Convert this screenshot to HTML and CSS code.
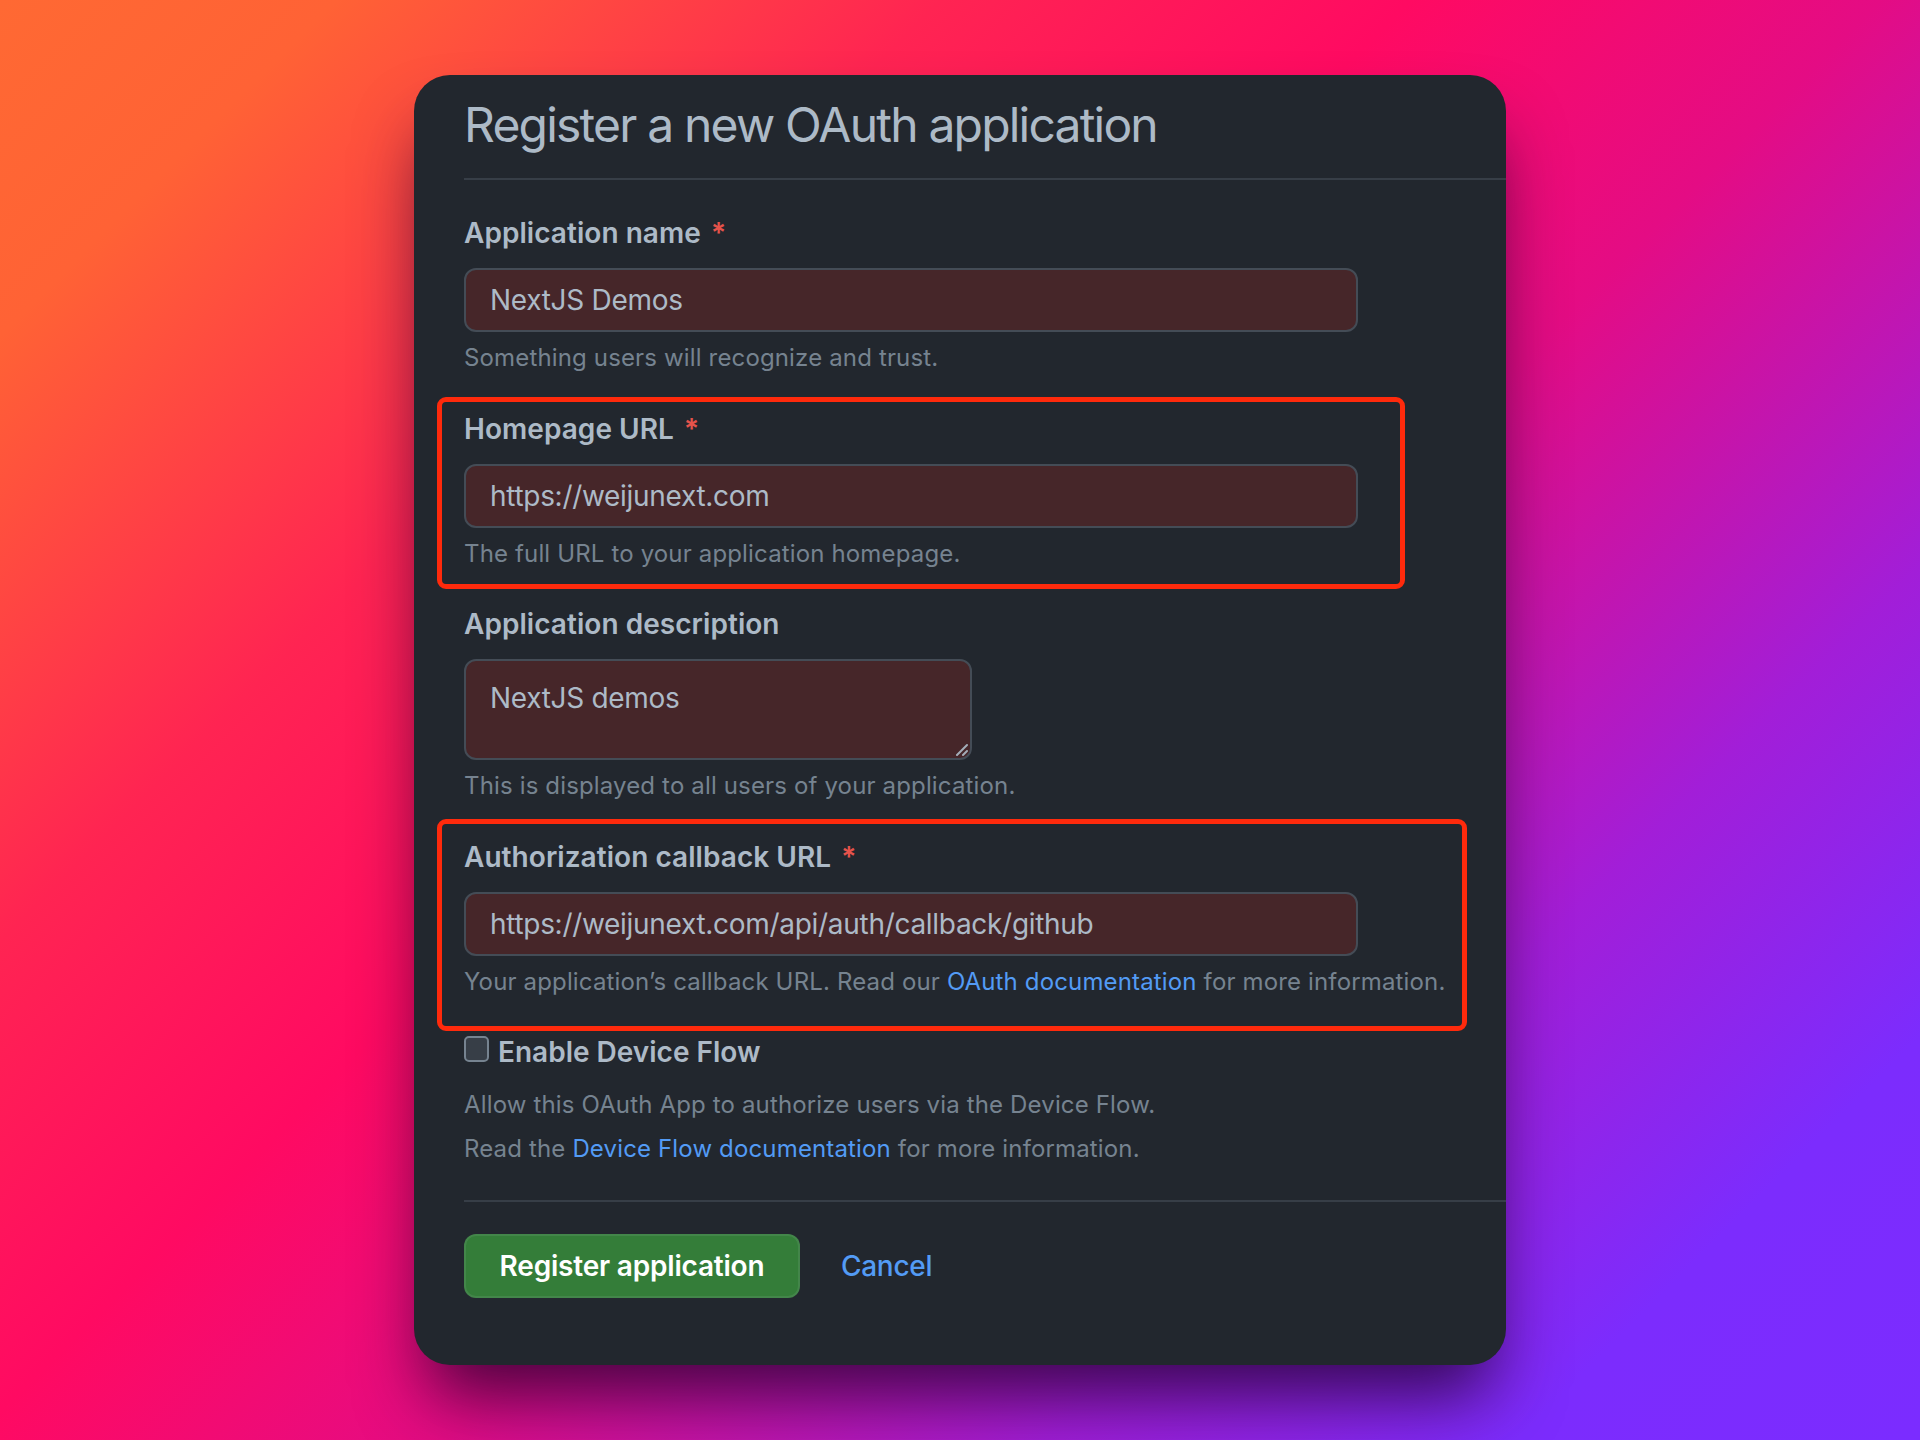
FILE: index.html
```html
<!DOCTYPE html>
<html lang="en">
<head>
<meta charset="utf-8">
<title>Register a new OAuth application</title>
<link rel="stylesheet" href="styles.css">
</head>
<body>
<main class="card">
  <header class="card-header">
    <h1 class="title">Register a new OAuth application</h1>
  </header>
  <form class="form">
    <div class="group">
      <label class="label">Application name <span class="req">*</span></label>
      <input class="field" type="text" value="NextJS Demos">
      <p class="help">Something users will recognize and trust.</p>
    </div>
    <div class="group">
      <label class="label">Homepage URL <span class="req">*</span></label>
      <input class="field" type="text" value="https://weijunext.com">
      <p class="help">The full URL to your application homepage.</p>
      <span class="mark mark-home"></span>
    </div>
    <div class="group">
      <label class="label">Application description</label>
      <div class="area-wrap">
        <textarea class="area">NextJS demos</textarea>
        <svg class="grip" width="14" height="14" viewBox="0 0 14 14"><path d="M13 3 L3 13 M13 9 L9 13" stroke="#a3adb8" stroke-width="2" stroke-linecap="round"/></svg>
      </div>
      <p class="help">This is displayed to all users of your application.</p>
    </div>
    <div class="group">
      <label class="label">Authorization callback URL <span class="req">*</span></label>
      <input class="field" type="text" value="https://weijunext.com/api/auth/callback/github">
      <p class="help">Your application’s callback URL. Read our <a class="link" href="#">OAuth documentation</a> for more information.</p>
      <span class="mark mark-callback"></span>
    </div>
    <div class="device">
      <label class="check-row"><input class="check" type="checkbox"><span class="check-label">Enable Device Flow</span></label>
      <p class="help help-first">Allow this OAuth App to authorize users via the Device Flow.</p>
      <p class="help help-second">Read the <a class="link" href="#">Device Flow documentation</a> for more information.</p>
    </div>
    <div class="actions">
      <button class="btn" type="button">Register application</button>
      <a class="cancel" href="#">Cancel</a>
    </div>
  </form>
</main>
</body>
</html>
```

FILE: styles.css
```css
* { box-sizing: border-box; }

html, body {
  margin: 0;
  padding: 0;
}

body {
  width: 1920px;
  height: 1440px;
  display: flex;
  align-items: center;
  justify-content: center;
  font-family: Inter, "Noto Sans", "Liberation Sans", sans-serif;
  background: linear-gradient(135deg, #ff6933 0%, #ff6235 10%, #ff2452 28%, #ff0a62 42%, #e40c84 56%, #a21ed8 74%, #7c2cfd 88%, #7b2cff 100%);
  overflow: hidden;
}

.card {
  width: 1092px;
  height: 1290px;
  background: #22272e;
  border-radius: 36px;
  padding-left: 50px;
  box-shadow: 0 45px 70px -15px rgba(30, 0, 45, 0.8);
}

.card-header {
  padding-top: 20px;
  padding-bottom: 23px;
  border-bottom: 2px solid #373e47;
}

.title {
  margin: 0;
  font-size: 48px;
  line-height: 60px;
  font-weight: 400;
  color: #adbac7;
  letter-spacing: -1.8px;
}

.form {
  display: flex;
  flex-direction: column;
  margin-top: 33px;
}

.group {
  position: relative;
  display: flex;
  flex-direction: column;
  align-items: flex-start;
  margin-bottom: 32.5px;
}

.label {
  display: block;
  font-size: 28px;
  line-height: 40px;
  font-weight: 600;
  color: #adbac7;
  letter-spacing: 0.05px;
}

.req {
  color: #e5534b;
  margin-left: 3px;
}

.field {
  margin-top: 15px;
  width: 894px;
  height: 64px;
  padding: 0 24px;
  background: #462629;
  border: 2px solid #444c56;
  border-radius: 12px;
  font-family: inherit;
  font-size: 28px;
  color: #adbac7;
  outline: none;
  letter-spacing: -0.3px;
}

.area-wrap {
  position: relative;
  margin-top: 15px;
  width: 508px;
  height: 101px;
}

.area {
  display: block;
  width: 100%;
  height: 100%;
  padding: 17px 24px;
  background: #462629;
  border: 2px solid #444c56;
  border-radius: 12px;
  font-family: inherit;
  font-size: 28px;
  line-height: 40px;
  color: #adbac7;
  resize: none;
  outline: none;
  letter-spacing: -0.3px;
}

.grip {
  position: absolute;
  right: 4px;
  bottom: 4px;
}

.help {
  margin: 8px 0 0;
  font-size: 24px;
  line-height: 36px;
  color: #768390;
  letter-spacing: 0.15px;
}

.link {
  color: #539bf5;
  text-decoration: none;
}

.mark {
  position: absolute;
  left: -27px;
  border: 5px solid #ff2a0c;
  border-radius: 9px;
  pointer-events: none;
}

.mark-home {
  top: -12px;
  width: 968px;
  height: 192px;
}

.mark-callback {
  top: -18px;
  width: 1030px;
  height: 212px;
}

.device {
  display: flex;
  flex-direction: column;
}

.check-row {
  display: flex;
  align-items: flex-end;
  height: 40px;
  padding-bottom: 10px;
}

.check {
  -webkit-appearance: none;
  appearance: none;
  margin: 0 9px 0 0;
  width: 25px;
  height: 26px;
  background: #373e47;
  border: 2px solid #768390;
  border-radius: 5px;
}

.check-label {
  font-size: 28px;
  line-height: 40px;
  height: 40px;
  margin-bottom: -10px;
  font-weight: 600;
  color: #adbac7;
  letter-spacing: 0;
}

.help-first {
  margin-top: 14.5px;
}

.help-second {
  margin-top: 8px;
}

.actions {
  display: flex;
  align-items: center;
  margin-top: 33.7px;
  padding-top: 32px;
  border-top: 2px solid #373e47;
}

.btn {
  height: 64px;
  width: 336px;
  padding: 0;
  background: #347d39;
  border: 2px solid rgba(205, 217, 229, 0.1);
  border-radius: 12px;
  font-family: inherit;
  font-size: 28px;
  font-weight: 600;
  color: #ffffff;
  letter-spacing: -0.2px;
}

.cancel {
  margin-left: 41px;
  font-size: 28px;
  font-weight: 500;
  color: #539bf5;
  text-decoration: none;
  letter-spacing: -0.3px;
}
```
